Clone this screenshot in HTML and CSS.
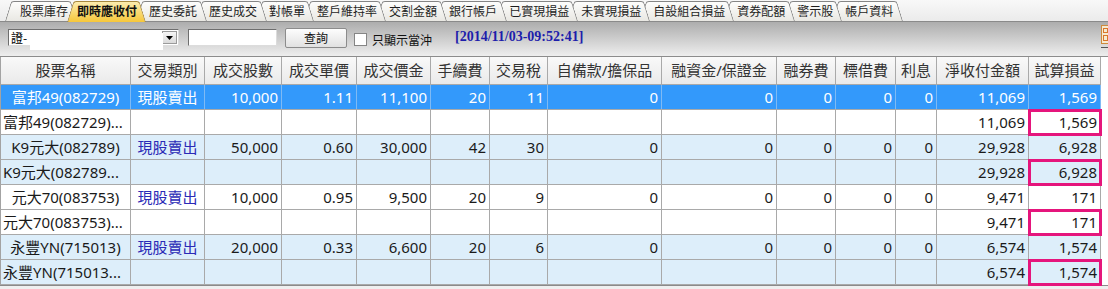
FILE: index.html
```html
<!DOCTYPE html>
<html lang="zh-Hant">
<head>
<meta charset="utf-8">
<title>即時應收付</title>
<link rel="stylesheet" href="styles.css">
</head>
<body>
<div class="app">
  <div class="tabstrip">
    <div class="tab">股票庫存</div>
    <div class="tab active">即時應收付</div>
    <div class="tab">歷史委託</div>
    <div class="tab">歷史成交</div>
    <div class="tab">對帳單</div>
    <div class="tab">整戶維持率</div>
    <div class="tab">交割金額</div>
    <div class="tab">銀行帳戶</div>
    <div class="tab">已實現損益</div>
    <div class="tab">未實現損益</div>
    <div class="tab">自設組合損益</div>
    <div class="tab">資券配額</div>
    <div class="tab">警示股</div>
    <div class="tab">帳戶資料</div>
  </div>

  <div class="toolbar">
    <div class="select">
      <span class="select-text">證-</span>
      <span class="select-btn"><svg width="7" height="4" viewBox="0 0 7 4"><path d="M0 0h7L3.5 4z" fill="#000"/></svg></span>
      <span class="mask"></span>
    </div>
    <div class="textbox"></div>
    <button class="btn">查詢</button>
    <label class="check"><span class="checkbox"></span>只顯示當沖</label>
    <span class="stamp">[2014/11/03-09:52:41]</span>
    <span class="corner">
      <svg width="8" height="24" viewBox="0 0 8 24">
        <rect x="0.5" y="0.5" width="12" height="18" fill="#f6ead2" stroke="#cf8a3c"/>
        <rect x="2.5" y="3.5" width="4" height="4" fill="none" stroke="#d9772b"/>
        <rect x="2.5" y="10.5" width="4" height="5" fill="none" stroke="#d9772b"/>
        <path d="M0 22.5h8" stroke="#555"/>
      </svg>
    </span>
  </div>

  <div class="grid">
    <div class="row head">
      <div class="cell">股票名稱</div>
      <div class="cell">交易類別</div>
      <div class="cell">成交股數</div>
      <div class="cell">成交單價</div>
      <div class="cell">成交價金</div>
      <div class="cell">手續費</div>
      <div class="cell">交易稅</div>
      <div class="cell">自備款/擔保品</div>
      <div class="cell">融資金/保證金</div>
      <div class="cell">融券費</div>
      <div class="cell">標借費</div>
      <div class="cell">利息</div>
      <div class="cell">淨收付金額</div>
      <div class="cell">試算損益</div>
    </div>

    <div class="row sel">
      <div class="cell c">富邦49(082729)</div>
      <div class="cell c type">現股賣出</div>
      <div class="cell r">10,000</div>
      <div class="cell r">1.11</div>
      <div class="cell r">11,100</div>
      <div class="cell r">20</div>
      <div class="cell r">11</div>
      <div class="cell r">0</div>
      <div class="cell r">0</div>
      <div class="cell r">0</div>
      <div class="cell r">0</div>
      <div class="cell r">0</div>
      <div class="cell r">11,069</div>
      <div class="cell r">1,569</div>
    </div>
    <div class="row">
      <div class="cell l">富邦49(082729)...</div>
      <div class="cell"></div><div class="cell"></div><div class="cell"></div><div class="cell"></div><div class="cell"></div><div class="cell"></div><div class="cell"></div><div class="cell"></div><div class="cell"></div><div class="cell"></div><div class="cell"></div>
      <div class="cell r">11,069</div>
      <div class="cell r mark">1,569</div>
    </div>

    <div class="row alt">
      <div class="cell c">K9元大(082789)</div>
      <div class="cell c type">現股賣出</div>
      <div class="cell r">50,000</div>
      <div class="cell r">0.60</div>
      <div class="cell r">30,000</div>
      <div class="cell r">42</div>
      <div class="cell r">30</div>
      <div class="cell r">0</div>
      <div class="cell r">0</div>
      <div class="cell r">0</div>
      <div class="cell r">0</div>
      <div class="cell r">0</div>
      <div class="cell r">29,928</div>
      <div class="cell r">6,928</div>
    </div>
    <div class="row alt">
      <div class="cell l">K9元大(082789...</div>
      <div class="cell"></div><div class="cell"></div><div class="cell"></div><div class="cell"></div><div class="cell"></div><div class="cell"></div><div class="cell"></div><div class="cell"></div><div class="cell"></div><div class="cell"></div><div class="cell"></div>
      <div class="cell r">29,928</div>
      <div class="cell r mark">6,928</div>
    </div>

    <div class="row">
      <div class="cell c">元大70(083753)</div>
      <div class="cell c type">現股賣出</div>
      <div class="cell r">10,000</div>
      <div class="cell r">0.95</div>
      <div class="cell r">9,500</div>
      <div class="cell r">20</div>
      <div class="cell r">9</div>
      <div class="cell r">0</div>
      <div class="cell r">0</div>
      <div class="cell r">0</div>
      <div class="cell r">0</div>
      <div class="cell r">0</div>
      <div class="cell r">9,471</div>
      <div class="cell r">171</div>
    </div>
    <div class="row">
      <div class="cell l">元大70(083753)...</div>
      <div class="cell"></div><div class="cell"></div><div class="cell"></div><div class="cell"></div><div class="cell"></div><div class="cell"></div><div class="cell"></div><div class="cell"></div><div class="cell"></div><div class="cell"></div><div class="cell"></div>
      <div class="cell r">9,471</div>
      <div class="cell r mark">171</div>
    </div>

    <div class="row alt">
      <div class="cell c">永豐YN(715013)</div>
      <div class="cell c type">現股賣出</div>
      <div class="cell r">20,000</div>
      <div class="cell r">0.33</div>
      <div class="cell r">6,600</div>
      <div class="cell r">20</div>
      <div class="cell r">6</div>
      <div class="cell r">0</div>
      <div class="cell r">0</div>
      <div class="cell r">0</div>
      <div class="cell r">0</div>
      <div class="cell r">0</div>
      <div class="cell r">6,574</div>
      <div class="cell r">1,574</div>
    </div>
    <div class="row alt">
      <div class="cell l">永豐YN(715013...</div>
      <div class="cell"></div><div class="cell"></div><div class="cell"></div><div class="cell"></div><div class="cell"></div><div class="cell"></div><div class="cell"></div><div class="cell"></div><div class="cell"></div><div class="cell"></div><div class="cell"></div>
      <div class="cell r">6,574</div>
      <div class="cell r mark">1,574</div>
    </div>

    <div class="grid-foot"></div>
  </div>
</div>
</body>
</html>
```

FILE: styles.css
```css
html, body {
  margin: 0;
  padding: 0;
}
body {
  font-family: "Noto Sans", "Noto Sans CJK TC", sans-serif;
  background: #ececec;
}
.app {
  width: 1108px;
  height: 289px;
  overflow: hidden;
  background: #ececec;
}

/* ---------- tabs ---------- */
.tabstrip {
  height: 22px;
  box-sizing: border-box;
  border-bottom: 1px solid #8a8a8a;
  background: linear-gradient(#f8f8f8, #ebebeb);
  display: flex;
  align-items: flex-end;
  padding-left: 5px;
}
.tab {
  position: relative;
  height: 20px;
  box-sizing: border-box;
  padding: 0 9px 0 13px;
  margin-left: -10px;
  font: 12px/20px "Noto Sans CJK TC", sans-serif;
  color: #1e1e1e;
  white-space: nowrap;
}
.tab:first-child {
  margin-left: 0;
  padding-left: 15px;
}
.tab::before,
.tab::after {
  content: "";
  position: absolute;
  top: 0;
  bottom: 0;
  z-index: -1;
  background: linear-gradient(#fdfdfc, #e9e8e3);
  border-top: 1px solid #858585;
}
.tab::before {
  left: 0;
  right: 45%;
  border-left: 1px solid #858585;
  border-top-left-radius: 3px;
  transform: skewX(-17deg);
  transform-origin: bottom left;
}
.tab::after {
  left: 45%;
  right: 0;
  border-right: 1px solid #858585;
  border-top-right-radius: 3px;
  transform: skewX(17deg);
  transform-origin: bottom right;
}
.tab:nth-child(1) { z-index: 14; }
.tab:nth-child(2) { z-index: 30; }
.tab:nth-child(3) { z-index: 12; }
.tab:nth-child(4) { z-index: 11; }
.tab:nth-child(5) { z-index: 10; }
.tab:nth-child(6) { z-index: 9; }
.tab:nth-child(7) { z-index: 8; }
.tab:nth-child(8) { z-index: 7; }
.tab:nth-child(9) { z-index: 6; }
.tab:nth-child(10) { z-index: 5; }
.tab:nth-child(11) { z-index: 4; }
.tab:nth-child(12) { z-index: 3; }
.tab:nth-child(13) { z-index: 2; }
.tab:nth-child(14) { z-index: 1; }

.tab.active {
  height: 21px;
  margin-bottom: -1px;
  padding-left: 10px;
  font-weight: bold;
  color: #111;
}
.tab.active::before,
.tab.active::after {
  background: linear-gradient(#fcecae, #f6c73a);
  border-color: #a8893f;
}

/* ---------- toolbar ---------- */
.toolbar {
  height: 34px;
  box-sizing: border-box;
  background: linear-gradient(#adadad, #eeeeee);
  display: flex;
  align-items: center;
  padding: 0 0 3px 8px;
  font: 12px "Noto Sans CJK TC", sans-serif;
  color: #111;
}
.select {
  position: relative;
  width: 171px;
  height: 17px;
  box-sizing: border-box;
  background: #fff;
  border: 1px solid;
  border-color: #6e6e6e #dcdcdc #dcdcdc #6e6e6e;
}
.select-text {
  display: block;
  padding-left: 2px;
  line-height: 15px;
  font-size: 12px;
  color: #000;
}
.select-btn {
  position: absolute;
  right: 1px;
  top: 1px;
  width: 15px;
  height: 13px;
  box-sizing: border-box;
  border: 1px solid #9a9a9a;
  background: linear-gradient(#f6f6f6, #dadada);
  display: flex;
  align-items: center;
  justify-content: center;
}
.mask {
  position: absolute;
  left: 21px;
  top: 3px;
  width: 133px;
  height: 17px;
  background: #fff;
}
.textbox {
  margin-left: 9px;
  width: 89px;
  height: 17px;
  box-sizing: border-box;
  background: #fff;
  border: 1px solid;
  border-color: #6e6e6e #dcdcdc #dcdcdc #6e6e6e;
}
.btn {
  margin-left: 8px;
  width: 62px;
  height: 20px;
  box-sizing: border-box;
  padding: 0;
  border: 1px solid #8c8c8c;
  border-radius: 2px;
  background: linear-gradient(#fdfdfd, #e1e1e1);
  font: 12px "Noto Sans CJK TC", sans-serif;
  color: #111;
}
.check {
  margin-left: 7px;
  display: flex;
  align-items: center;
  gap: 5px;
  margin-top: 3px;
}
.checkbox {
  width: 13px;
  height: 13px;
  box-sizing: border-box;
  border: 1px solid #858585;
  background: #fff;
}
.stamp {
  margin-left: 23px;
  font: bold 14px "Liberation Serif", serif;
  color: #1d1dab;
  margin-top: -1px;
}
.corner {
  margin-left: auto;
  align-self: flex-start;
  margin-top: 3px;
  width: 7px;
  height: 24px;
  overflow: hidden;
}
.corner svg { display: block; }

/* ---------- grid ---------- */
.grid {
  border-top: 1px solid #8c8c8c;
  background: #fff;
  height: 233px;
}
.row {
  display: grid;
  grid-template-columns: 130px 74px 77px 75px 74px 59px 58px 114px 115px 59px 60px 41px 92px 72px;
  width: 1101px;
  height: 25px;
  box-sizing: border-box;
  border-left: 1px solid #a3a3a3;
  border-bottom: 1px solid #a9a9a9;
  background: #fff;
  color: #1a1a1a;
}
.cell {
  box-sizing: border-box;
  border-right: 1px solid #a9a9a9;
  padding: 0 3px;
  font-size: 15px;
  line-height: 24px;
  white-space: nowrap;
  overflow: hidden;
}
.row.head {
  height: 28px;
  background: linear-gradient(#f9f9f9, #eaeaea);
  color: #333;
}
.row.head .cell {
  text-align: center;
  line-height: 27px;
  padding: 0;
}
.row.alt { background: #ddeefa; }
.row.sel { background: #3399fb; color: #fff; }
.row.sel .cell { border-right-color: #7fbaf4; }
.c { text-align: center; }
.r { text-align: right; }
.l { text-align: left; padding-left: 2px; }
.type { color: #2a2ab6; }
.row.sel .type { color: #fff; }
.mark {
  position: relative;
  overflow: visible;
}
.mark::after {
  content: "";
  position: absolute;
  top: -1px;
  left: -1px;
  right: -2px;
  bottom: -2px;
  border: 3px solid #e5157c;
  pointer-events: none;
}
.grid-foot {
  height: 4px;
  border-top: 1px solid #8a8a8a;
  background: #efefef;
}
```
